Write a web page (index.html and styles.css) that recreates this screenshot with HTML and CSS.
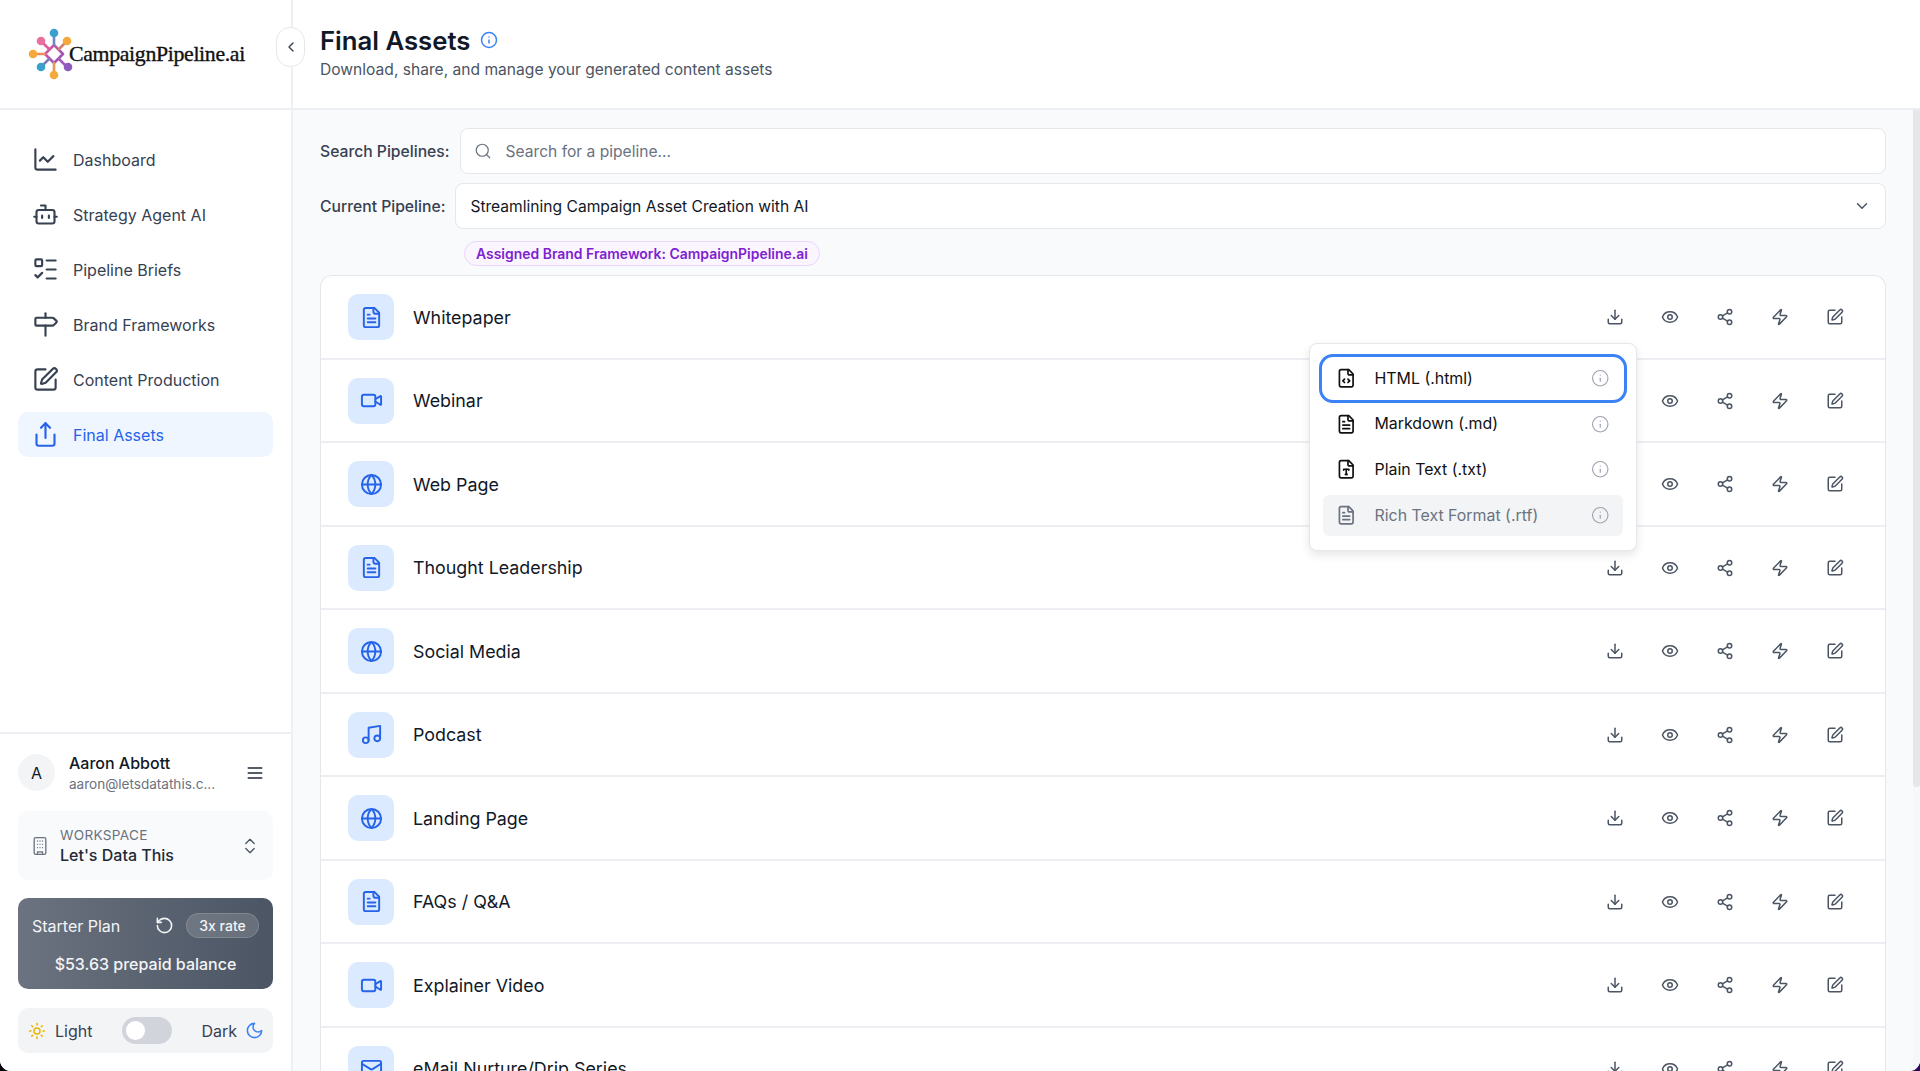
FILE: index.html
```html
<!DOCTYPE html>
<html lang="en">
<head>
    <meta charset="UTF-8">
    <meta name="viewport" content="width=device-width, initial-scale=1.0">
    <title>Final Assets</title>
    <link rel="stylesheet" href="styles.css">
</head>
<body>
    <svg class="sprite" xmlns="http://www.w3.org/2000/svg">
        <symbol id="i-chart" viewBox="0 0 24 24"><path d="M3 3v16a2 2 0 0 0 2 2h16"/><path d="m19 9-5 5-4-4-3 3"/></symbol>
        <symbol id="i-bot" viewBox="0 0 24 24"><path d="M12 8V4H8"/><rect width="16" height="12" x="4" y="8" rx="2"/><path d="M2 14h2"/><path d="M20 14h2"/><path d="M15 13v2"/><path d="M9 13v2"/></symbol>
        <symbol id="i-todo" viewBox="0 0 24 24"><rect x="3" y="3" width="6" height="6" rx="1"/><path d="m3 17 2 2 4-4"/><path d="M13 4h8"/><path d="M13 12h8"/><path d="M13 20h8"/></symbol>
        <symbol id="i-sign" viewBox="0 0 24 24"><path d="M12 13v9"/><path d="M12 2v4"/><path d="M4 6h14a2 2 0 0 1 1.4.56l2.3 2.22a1 1 0 0 1 0 1.44l-2.3 2.22A2 2 0 0 1 18 13H4a1 1 0 0 1-1-1V7a1 1 0 0 1 1-1z"/></symbol>
        <symbol id="i-pen" viewBox="0 0 24 24"><path d="M12 3H5a2 2 0 0 0-2 2v14a2 2 0 0 0 2 2h14a2 2 0 0 0 2-2v-7"/><path d="M18.375 2.625a1 1 0 0 1 3 3l-9.013 9.014a2 2 0 0 1-.853.505l-2.873.84a.5.5 0 0 1-.62-.62l.84-2.873a2 2 0 0 1 .506-.852z"/></symbol>
        <symbol id="i-share" viewBox="0 0 24 24"><path d="M4 12v8a2 2 0 0 0 2 2h12a2 2 0 0 0 2-2v-8"/><path d="M16 6l-4-4-4 4"/><path d="M12 2v13"/></symbol>
        <symbol id="i-menu" viewBox="0 0 24 24"><path d="M4 6h16"/><path d="M4 12h16"/><path d="M4 18h16"/></symbol>
        <symbol id="i-building" viewBox="0 0 24 24"><rect x="5" y="2" width="14" height="20" rx="2"/><path d="M9 22v-3h6v3"/><path d="M9 6h.01M12 6h.01M15 6h.01M9 10h.01M12 10h.01M15 10h.01M9 14h.01M12 14h.01M15 14h.01"/></symbol>
        <symbol id="i-updown" viewBox="0 0 24 24"><path d="m7 15 5 5 5-5"/><path d="m7 9 5-5 5 5"/></symbol>
        <symbol id="i-rotate" viewBox="0 0 24 24"><path d="M3 12a9 9 0 1 0 9-9 9.75 9.75 0 0 0-6.74 2.74L3 8"/><path d="M3 3v5h5"/></symbol>
        <symbol id="i-sun" viewBox="0 0 24 24"><circle cx="12" cy="12" r="4"/><path d="M12 2v2"/><path d="M12 20v2"/><path d="m4.93 4.93 1.41 1.41"/><path d="m17.66 17.66 1.41 1.41"/><path d="M2 12h2"/><path d="M20 12h2"/><path d="m6.34 17.66-1.41 1.41"/><path d="m19.07 4.93-1.41 1.41"/></symbol>
        <symbol id="i-moon" viewBox="0 0 24 24"><path d="M12 3a6 6 0 0 0 9 9 9 9 0 1 1-9-9Z"/></symbol>
        <symbol id="i-download" viewBox="0 0 24 24"><path d="M21 15v4a2 2 0 0 1-2 2H5a2 2 0 0 1-2-2v-4"/><path d="M7 10l5 5 5-5"/><path d="M12 15V3"/></symbol>
        <symbol id="i-eye" viewBox="0 0 24 24"><path d="M2.062 12.348a1 1 0 0 1 0-.696 10.75 10.75 0 0 1 19.876 0 1 1 0 0 1 0 .696 10.75 10.75 0 0 1-19.876 0"/><circle cx="12" cy="12" r="3"/></symbol>
        <symbol id="i-nodes" viewBox="0 0 24 24"><circle cx="18" cy="5" r="3"/><circle cx="6" cy="12" r="3"/><circle cx="18" cy="19" r="3"/><path d="M8.59 13.51l6.83 3.98"/><path d="M15.41 6.51l-6.82 3.98"/></symbol>
        <symbol id="i-zap" viewBox="0 0 24 24"><path d="M4 14a1 1 0 0 1-.78-1.63l9.9-10.2a.5.5 0 0 1 .86.46l-1.92 6.02A1 1 0 0 0 13 10h7a1 1 0 0 1 .78 1.63l-9.9 10.2a.5.5 0 0 1-.86-.46l1.92-6.02A1 1 0 0 0 11 14z"/></symbol>
        <symbol id="i-file" viewBox="0 0 24 24"><path d="M15 2H6a2 2 0 0 0-2 2v16a2 2 0 0 0 2 2h12a2 2 0 0 0 2-2V7Z"/><path d="M14 2v4a2 2 0 0 0 2 2h4"/><path d="M10 9H8"/><path d="M16 13H8"/><path d="M16 17H8"/></symbol>
        <symbol id="i-video" viewBox="0 0 24 24"><path d="m16 13 5.223 3.482a.5.5 0 0 0 .777-.416V7.87a.5.5 0 0 0-.752-.432L16 10.5"/><rect x="2" y="6" width="14" height="12" rx="2"/></symbol>
        <symbol id="i-globe" viewBox="0 0 24 24"><circle cx="12" cy="12" r="10"/><path d="M12 2a14.5 14.5 0 0 0 0 20 14.5 14.5 0 0 0 0-20"/><path d="M2 12h20"/></symbol>
        <symbol id="i-music" viewBox="0 0 24 24"><path d="M9 18V5l12-2v13"/><circle cx="6" cy="18" r="3"/><circle cx="18" cy="16" r="3"/></symbol>
        <symbol id="i-mail" viewBox="0 0 24 24"><rect x="2" y="4" width="20" height="16" rx="2"/><path d="m22 7-8.97 5.7a1.94 1.94 0 0 1-2.06 0L2 7"/></symbol>
        <symbol id="i-filecode" viewBox="0 0 24 24"><path d="M15 2H6a2 2 0 0 0-2 2v16a2 2 0 0 0 2 2h12a2 2 0 0 0 2-2V7Z"/><path d="M14 2v4a2 2 0 0 0 2 2h4"/><path d="m10 13-2 2 2 2"/><path d="m14 17 2-2-2-2"/></symbol>
        <symbol id="i-filetype" viewBox="0 0 24 24"><path d="M15 2H6a2 2 0 0 0-2 2v16a2 2 0 0 0 2 2h12a2 2 0 0 0 2-2V7Z"/><path d="M14 2v4a2 2 0 0 0 2 2h4"/><path d="M9 13v-1h6v1"/><path d="M12 12v6"/><path d="M11 18h2"/></symbol>
        <symbol id="i-info" viewBox="0 0 24 24"><circle cx="12" cy="12" r="10"/><path d="M12 16v-4"/><path d="M12 8h.01"/></symbol>
        <symbol id="i-search" viewBox="0 0 24 24"><circle cx="11" cy="11" r="8"/><path d="m21 21-4.3-4.3"/></symbol>
        <symbol id="i-left" viewBox="0 0 24 24"><path d="m15 18-6-6 6-6"/></symbol>
        <symbol id="i-down" viewBox="0 0 24 24"><path d="m6 9 6 6 6-6"/></symbol>
    </svg>

    <div class="app">
        <aside class="sidebar">
            <div class="brand">
                <svg class="brand-mark" viewBox="28 28 46 52">
                    <defs>
                        <linearGradient id="hub" x1="0" y1="0" x2="1" y2="1">
                            <stop offset="0" stop-color="#e0559c"/>
                            <stop offset="1" stop-color="#8a55c0"/>
                        </linearGradient>
                    </defs>
                    <g stroke-width="2.6">
                        <path d="M54 45 63 54 54 63 45 54Z" stroke="url(#hub)"/>
                        <path d="M54 45V34" stroke="#6f88c4"/>
                        <path d="M54 63v11" stroke="#e59a5c"/>
                        <path d="M45 54H34" stroke="#ea8d5c"/>
                        <path d="M49 49l-7-7" stroke="#de5f9d"/>
                        <path d="M59 49l8-8" stroke="#d2806f"/>
                        <path d="M49 59l-7 7" stroke="#7d7cbc"/>
                        <path d="M59 59l8 8" stroke="#a45cb8"/>
                    </g>
                    <g stroke="none">
                        <circle cx="54" cy="33" r="4.300" fill="#3b9fcf"/>
                        <circle cx="67" cy="41" r="4.300" fill="#f5a93a"/>
                        <circle cx="41" cy="41" r="4.300" fill="#e86f9e"/>
                        <circle cx="33" cy="54" r="4.300" fill="#f5a93a"/>
                        <circle cx="41" cy="67" r="4.300" fill="#38a0cd"/>
                        <circle cx="68" cy="67" r="4.300" fill="#8c5cbd"/>
                        <circle cx="54" cy="75" r="4.300" fill="#f5ab3c"/>
                    </g>
                </svg>
                <span class="brand-name">CampaignPipeline.ai</span>
            </div>
            <nav class="nav">
                <a class="nav-item"><svg class="nav-icon"><use href="#i-chart"/></svg>Dashboard</a>
                <a class="nav-item"><svg class="nav-icon"><use href="#i-bot"/></svg>Strategy Agent AI</a>
                <a class="nav-item"><svg class="nav-icon"><use href="#i-todo"/></svg>Pipeline Briefs</a>
                <a class="nav-item"><svg class="nav-icon"><use href="#i-sign"/></svg>Brand Frameworks</a>
                <a class="nav-item"><svg class="nav-icon"><use href="#i-pen"/></svg>Content Production</a>
                <a class="nav-item active"><svg class="nav-icon"><use href="#i-share"/></svg>Final Assets</a>
            </nav>
            <div class="side-bottom">
                <div class="user">
                    <div class="avatar">A</div>
                    <div class="user-info">
                        <div class="user-name">Aaron Abbott</div>
                        <div class="user-mail">aaron@letsdatathis.c...</div>
                    </div>
                    <svg class="user-menu"><use href="#i-menu"/></svg>
                </div>
                <div class="workspace">
                    <svg class="ws-icon"><use href="#i-building"/></svg>
                    <div class="ws-text">
                        <div class="ws-label">WORKSPACE</div>
                        <div class="ws-name">Let's Data This</div>
                    </div>
                    <svg class="ws-arrows"><use href="#i-updown"/></svg>
                </div>
                <div class="plan">
                    <div class="plan-top">
                        <span class="plan-name">Starter Plan</span>
                        <svg class="plan-icon"><use href="#i-rotate"/></svg>
                        <span class="plan-rate">3x rate</span>
                    </div>
                    <div class="plan-balance">$53.63 prepaid balance</div>
                </div>
                <div class="theme">
                    <svg class="theme-sun"><use href="#i-sun"/></svg>
                    <span class="theme-light">Light</span>
                    <span class="switch"><span class="knob"></span></span>
                    <span class="theme-dark">Dark</span>
                    <svg class="theme-moon"><use href="#i-moon"/></svg>
                </div>
            </div>
        </aside>

        <main class="main">
            <button class="collapse"><svg><use href="#i-left"/></svg></button>
            <header class="topbar">
                <div class="title-row">
                    <h1>Final Assets</h1>
                    <svg class="title-info"><use href="#i-info"/></svg>
                </div>
                <p class="subtitle">Download, share, and manage your generated content assets</p>
            </header>
            <div class="content">
                <div class="field search-field">
                    <label>Search Pipelines:</label>
                    <div class="input">
                        <svg class="search-icon"><use href="#i-search"/></svg>
                        <span class="placeholder">Search for a pipeline...</span>
                    </div>
                </div>
                <div class="field pipeline-field">
                    <label>Current Pipeline:</label>
                    <div class="input select">
                        <span>Streamlining Campaign Asset Creation with AI</span>
                        <svg class="select-arrow"><use href="#i-down"/></svg>
                    </div>
                </div>
                <div class="badge-row"><span class="badge">Assigned Brand Framework: CampaignPipeline.ai</span></div>

                <div class="assets">
                    <div class="asset">
                        <div class="asset-icon"><svg><use href="#i-file"/></svg></div>
                        <div class="asset-name">Whitepaper</div>
                        <div class="actions"><svg><use href="#i-download"/></svg><svg><use href="#i-eye"/></svg><svg><use href="#i-nodes"/></svg><svg><use href="#i-zap"/></svg><svg><use href="#i-pen"/></svg></div>
                        <div class="menu">
                            <div class="menu-item focus"><svg class="menu-icon"><use href="#i-filecode"/></svg><span>HTML (.html)</span><svg class="menu-info"><use href="#i-info"/></svg></div>
                            <div class="menu-item"><svg class="menu-icon"><use href="#i-file"/></svg><span>Markdown (.md)</span><svg class="menu-info"><use href="#i-info"/></svg></div>
                            <div class="menu-item"><svg class="menu-icon"><use href="#i-filetype"/></svg><span>Plain Text (.txt)</span><svg class="menu-info"><use href="#i-info"/></svg></div>
                            <div class="menu-item muted"><svg class="menu-icon"><use href="#i-file"/></svg><span>Rich Text Format (.rtf)</span><svg class="menu-info"><use href="#i-info"/></svg></div>
                        </div>
                    </div>
                    <div class="asset">
                        <div class="asset-icon"><svg><use href="#i-video"/></svg></div>
                        <div class="asset-name">Webinar</div>
                        <div class="actions"><svg><use href="#i-download"/></svg><svg><use href="#i-eye"/></svg><svg><use href="#i-nodes"/></svg><svg><use href="#i-zap"/></svg><svg><use href="#i-pen"/></svg></div>
                    </div>
                    <div class="asset">
                        <div class="asset-icon"><svg><use href="#i-globe"/></svg></div>
                        <div class="asset-name">Web Page</div>
                        <div class="actions"><svg><use href="#i-download"/></svg><svg><use href="#i-eye"/></svg><svg><use href="#i-nodes"/></svg><svg><use href="#i-zap"/></svg><svg><use href="#i-pen"/></svg></div>
                    </div>
                    <div class="asset">
                        <div class="asset-icon"><svg><use href="#i-file"/></svg></div>
                        <div class="asset-name">Thought Leadership</div>
                        <div class="actions"><svg><use href="#i-download"/></svg><svg><use href="#i-eye"/></svg><svg><use href="#i-nodes"/></svg><svg><use href="#i-zap"/></svg><svg><use href="#i-pen"/></svg></div>
                    </div>
                    <div class="asset">
                        <div class="asset-icon"><svg><use href="#i-globe"/></svg></div>
                        <div class="asset-name">Social Media</div>
                        <div class="actions"><svg><use href="#i-download"/></svg><svg><use href="#i-eye"/></svg><svg><use href="#i-nodes"/></svg><svg><use href="#i-zap"/></svg><svg><use href="#i-pen"/></svg></div>
                    </div>
                    <div class="asset">
                        <div class="asset-icon"><svg><use href="#i-music"/></svg></div>
                        <div class="asset-name">Podcast</div>
                        <div class="actions"><svg><use href="#i-download"/></svg><svg><use href="#i-eye"/></svg><svg><use href="#i-nodes"/></svg><svg><use href="#i-zap"/></svg><svg><use href="#i-pen"/></svg></div>
                    </div>
                    <div class="asset">
                        <div class="asset-icon"><svg><use href="#i-globe"/></svg></div>
                        <div class="asset-name">Landing Page</div>
                        <div class="actions"><svg><use href="#i-download"/></svg><svg><use href="#i-eye"/></svg><svg><use href="#i-nodes"/></svg><svg><use href="#i-zap"/></svg><svg><use href="#i-pen"/></svg></div>
                    </div>
                    <div class="asset">
                        <div class="asset-icon"><svg><use href="#i-file"/></svg></div>
                        <div class="asset-name">FAQs / Q&amp;A</div>
                        <div class="actions"><svg><use href="#i-download"/></svg><svg><use href="#i-eye"/></svg><svg><use href="#i-nodes"/></svg><svg><use href="#i-zap"/></svg><svg><use href="#i-pen"/></svg></div>
                    </div>
                    <div class="asset">
                        <div class="asset-icon"><svg><use href="#i-video"/></svg></div>
                        <div class="asset-name">Explainer Video</div>
                        <div class="actions"><svg><use href="#i-download"/></svg><svg><use href="#i-eye"/></svg><svg><use href="#i-nodes"/></svg><svg><use href="#i-zap"/></svg><svg><use href="#i-pen"/></svg></div>
                    </div>
                    <div class="asset">
                        <div class="asset-icon"><svg><use href="#i-mail"/></svg></div>
                        <div class="asset-name">eMail Nurture/Drip Series</div>
                        <div class="actions"><svg><use href="#i-download"/></svg><svg><use href="#i-eye"/></svg><svg><use href="#i-nodes"/></svg><svg><use href="#i-zap"/></svg><svg><use href="#i-pen"/></svg></div>
                    </div>
                </div>
            </div>
            <div class="scroll-track"><div class="scroll-thumb"></div></div>
        </main>
    </div>
</body>
</html>
```

FILE: styles.css
```css
* {
    box-sizing: border-box;
}
html, body {
    margin: 0;
    height: 100%;
    overflow: hidden;
}
body {
    font-family: Inter, "Liberation Sans", sans-serif;
    font-size: 16px;
    color: #111827;
    background: linear-gradient(to right, #05030c, #2a0a5e);
}
svg {
    fill: none;
    stroke: currentColor;
    stroke-width: 2;
    stroke-linecap: round;
    stroke-linejoin: round;
    display: block;
    flex: none;
}
.sprite {
    position: absolute;
    width: 0;
    height: 0;
}
.app {
    display: flex;
    height: 1071px;
    overflow: hidden;
    background: #fff;
    border-radius: 0 0 11px 11px;
}

/* sidebar */
.sidebar {
    width: 293px;
    flex: none;
    display: flex;
    flex-direction: column;
    border-right: 2px solid #eef0f4;
    background: #fff;
}
.brand {
    height: 110px;
    flex: none;
    display: flex;
    align-items: center;
    padding: 0 0 0 28px;
    border-bottom: 2px solid #eceef2;
}
.brand-mark {
    width: 46px;
    height: 52px;
    flex: none;
}
.brand-name {
    font-family: "Liberation Serif", serif;
    font-size: 21.8px;
    letter-spacing: -0.33px;
    color: #111;
    margin: 0 0 0 -5px;
    -webkit-text-stroke: 0.35px #111;
}
.nav {
    flex: 1;
    padding: 27px 18px 0 18px;
    display: flex;
    flex-direction: column;
    gap: 10px;
}
.nav-item {
    display: flex;
    align-items: center;
    height: 45px;
    padding-left: 14px;
    border-radius: 10px;
    font-size: 16px;
    color: #374151;
}
.nav-icon {
    width: 27px;
    height: 27px;
    margin-right: 14px;
    stroke-width: 1.9;
}
.nav-item.active {
    background: #eff6ff;
    color: #2563eb;
}
.side-bottom {
    flex: none;
    height: 339px;
    padding: 18px 18px 0 18px;
    border-top: 2px solid #eceef2;
}
.user {
    display: flex;
    align-items: center;
    height: 41px;
}
.avatar {
    width: 37px;
    height: 37px;
    border-radius: 50%;
    background: #f3f4f6;
    display: flex;
    align-items: center;
    justify-content: center;
    font-size: 16px;
    color: #111827;
}
.user-info {
    flex: 1;
    margin-left: 14px;
    padding-top: 2px;
}
.user-name {
    font-size: 16px;
    font-weight: 450;
    line-height: 20px;
}
.user-mail {
    margin-top: 1px;
    font-size: 13.55px;
    line-height: 21px;
    color: #6b7280;
}
.user-menu {
    width: 20px;
    height: 20px;
    margin-right: 8px;
    color: #1f2937;
}
.workspace {
    display: flex;
    align-items: center;
    height: 69px;
    margin-top: 18px;
    padding: 0 13px 0 12px;
    background: #f9fafb;
    border-radius: 10px;
}
.ws-icon {
    width: 20px;
    height: 20px;
    color: #6b7280;
    stroke-width: 1.6;
}
.ws-text {
    flex: 1;
    margin-left: 10px;
}
.ws-label {
    font-size: 13.6px;
    line-height: 20px;
    color: #6b7280;
    letter-spacing: 0.3px;
}
.ws-name {
    font-size: 16px;
    font-weight: 450;
    line-height: 21px;
    color: #1f2937;
}
.ws-arrows {
    width: 20px;
    height: 20px;
    color: #4b5563;
    stroke-width: 1.6;
}
.plan {
    height: 91px;
    margin-top: 18px;
    padding: 15px 14px 0 14px;
    border-radius: 10px;
    color: #f3f4f6;
    background: linear-gradient(to right, #6b7280, #4b5563);
}
.plan-top {
    display: flex;
    align-items: center;
    height: 25px;
}
.plan-name {
    flex: 1;
    font-size: 16px;
}
.plan-icon {
    width: 19px;
    height: 19px;
    margin-right: 12px;
}
.plan-rate {
    width: 73px;
    height: 25px;
    border-radius: 13px;
    background: rgba(255, 255, 255, 0.15);
    border: 1px solid rgba(255, 255, 255, 0.15);
    font-size: 14px;
    font-weight: 500;
    line-height: 23px;
    text-align: center;
}
.plan-balance {
    margin-top: 14px;
    font-size: 16px;
    font-weight: 500;
    line-height: 24px;
    text-align: center;
}
.theme {
    display: flex;
    align-items: center;
    height: 45px;
    margin-top: 19px;
    padding: 0 9px 0 10px;
    background: #f3f4f6;
    border-radius: 10px;
    font-size: 16px;
    color: #374151;
}
.theme-sun {
    width: 18px;
    height: 18px;
    color: #eab308;
}
.theme-light {
    margin-left: 9px;
}
.switch {
    width: 50px;
    height: 27px;
    margin-left: 30px;
    padding: 4px;
    border-radius: 14px;
    background: #d1d5db;
}
.knob {
    display: block;
    width: 19px;
    height: 19px;
    border-radius: 50%;
    background: #fff;
}
.theme-dark {
    margin-left: auto;
}
.theme-moon {
    width: 19px;
    height: 19px;
    margin-left: 8px;
    color: #3b82f6;
}

/* main area */
.main {
    flex: 1;
    min-width: 0;
    position: relative;
    display: flex;
    flex-direction: column;
    background: #f9fafb;
}
.collapse {
    position: absolute;
    left: -17px;
    top: 27px;
    width: 29px;
    height: 40px;
    padding: 0;
    border: 1px solid #e5e7eb;
    border-radius: 14px;
    background: #fff;
    color: #374151;
    display: flex;
    align-items: center;
    justify-content: center;
}
.collapse svg {
    width: 16px;
    height: 16px;
}
.topbar {
    height: 110px;
    flex: none;
    padding: 24px 27px 0 27px;
    background: #fff;
    border-bottom: 2px solid #eceef2;
}
.title-row {
    display: flex;
    align-items: center;
    height: 33px;
}
h1 {
    margin: 0;
    font-size: 25.7px;
    font-weight: 600;
    line-height: 33px;
    color: #111827;
}
.title-info {
    width: 18px;
    height: 18px;
    margin-left: 10px;
    margin-top: -2px;
    color: #3b82f6;
}
.subtitle {
    margin: 1px 0 0;
    font-size: 15.6px;
    line-height: 24px;
    color: #4b5563;
}
.content {
    flex: 1;
    padding: 18px 34px 0 27px;
    overflow: hidden;
    font-size: 15.6px;
}
.field {
    display: flex;
    align-items: center;
    height: 46px;
}
.pipeline-field {
    margin-top: 9px;
}
.field label {
    font-size: 15.7px;
    font-weight: 500;
    color: #374151;
    white-space: nowrap;
}
.input {
    flex: 1;
    height: 46px;
    margin-left: 10px;
    display: flex;
    align-items: center;
    background: #fff;
    border: 1px solid #e5e7eb;
    border-radius: 8px;
}
.search-icon {
    width: 18px;
    height: 18px;
    margin-left: 13px;
    color: #6b7280;
    stroke-width: 1.6;
}
.placeholder {
    margin-left: 14px;
    color: #6b7280;
}
.select {
    padding: 0 14px;
    justify-content: space-between;
    color: #111827;
}
.select-arrow {
    width: 18px;
    height: 18px;
    color: #4b5563;
}
.badge-row {
    margin: 12px 0 0 144px;
    height: 25px;
}
.badge {
    display: inline-block;
    height: 25px;
    padding: 0 11px;
    border: 1px solid #e9d5ff;
    border-radius: 13px;
    background: #faf5ff;
    color: #7e22ce;
    font-size: 13.95px;
    font-weight: 600;
    line-height: 23px;
}
.assets {
    margin-top: 9px;
    background: #fff;
    border: 1px solid #e5e7eb;
    border-bottom: none;
    border-radius: 12px 12px 0 0;
}
.asset {
    position: relative;
    display: flex;
    align-items: center;
    height: 83.5px;
    padding: 1px 41px 0 27px;
    border-bottom: 2px solid #eceef2;
}
.asset-icon {
    width: 46px;
    height: 46px;
    border-radius: 10px;
    background: #dbeafe;
    color: #2563eb;
    display: flex;
    align-items: center;
    justify-content: center;
}
.asset-icon svg {
    width: 23px;
    height: 23px;
}
.asset-name {
    flex: 1;
    margin-left: 19px;
    font-size: 17.85px;
    font-weight: 400;
    color: #111827;
}
.actions {
    display: flex;
    gap: 37px;
    color: #4b5563;
}
.actions svg {
    width: 18px;
    height: 18px;
}

/* export dropdown */
.menu {
    position: absolute;
    left: 988px;
    top: 67px;
    width: 328px;
    height: 208px;
    padding: 13.5px 13px 0 13px;
    display: flex;
    flex-direction: column;
    gap: 4.8px;
    background: #fff;
    border: 1px solid #e5e7eb;
    border-radius: 8px;
    box-shadow: 0 4px 10px rgba(0, 0, 0, 0.1);
    z-index: 2;
}
.menu-item {
    display: flex;
    align-items: center;
    flex: none;
    height: 41px;
    padding: 0 14px 0 13px;
    border-radius: 6px;
    font-size: 15.9px;
    color: #111;
}
.menu-item span {
    flex: 1;
    margin-left: 18px;
}
.menu-icon {
    width: 20.5px;
    height: 20.5px;
}
.menu-info {
    width: 18.5px;
    height: 18.5px;
    color: #9ca3af;
    stroke-width: 1.5;
}
.menu-item.focus {
    outline: 3px solid #3b82f6;
    outline-offset: 1px;
    border-radius: 10px;
}
.menu-item.muted {
    background: #f3f4f6;
    color: #6b7280;
}

.scroll-track {
    position: absolute;
    right: 0;
    top: 110px;
    bottom: 0;
    width: 7px;
    background: #f7f8fa;
}
.scroll-thumb {
    height: 677px;
    background: #e5e7eb;
    border-radius: 0 0 4px 4px;
}
```
